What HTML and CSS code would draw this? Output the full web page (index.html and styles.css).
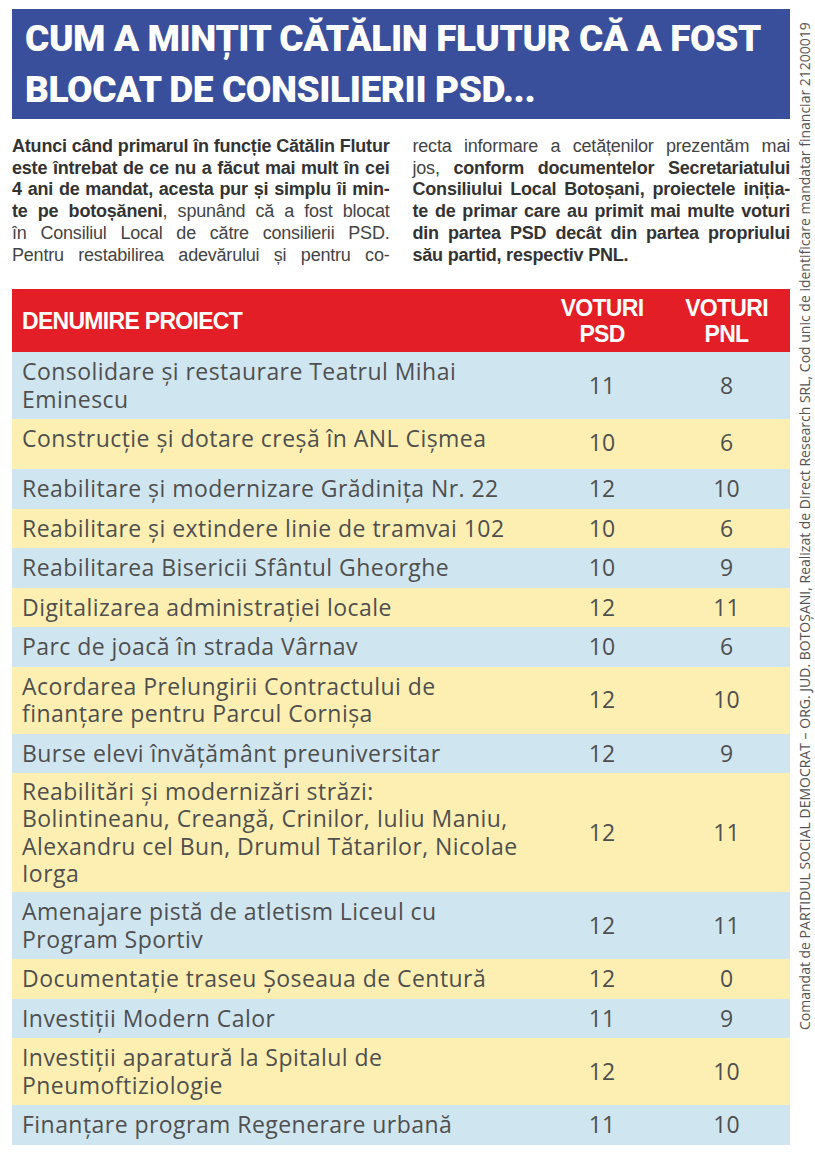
FILE: index.html
```html
<!DOCTYPE html>
<html lang="ro">
<head>
<meta charset="utf-8">
<title>Cum a mințit Cătălin Flutur</title>
<link rel="stylesheet" href="styles.css">
</head>
<body>
<div class="page">
  <main class="content">
    <header class="headline">
      <h1>CUM A MINȚIT CĂTĂLIN FLUTUR CĂ A FOST<br>BLOCAT DE CONSILIERII PSD...</h1>
    </header>
    <section class="intro">
      <div class="col">
        <span class="ln"><b>Atunci când primarul în funcție Cătălin Flutur</b></span>
        <span class="ln"><b>este întrebat de ce nu a făcut mai mult în cei</b></span>
        <span class="ln"><b>4 ani de mandat, acesta pur și simplu îi min-</b></span>
        <span class="ln"><b>te pe botoșăneni</b>, spunând că a fost blocat</span>
        <span class="ln">în Consiliul Local de către consilierii PSD.</span>
        <span class="ln">Pentru restabilirea adevărului și pentru co-</span>
      </div>
      <div class="col">
        <span class="ln">recta informare a cetățenilor prezentăm mai</span>
        <span class="ln">jos, <b>conform documentelor Secretariatului</b></span>
        <span class="ln"><b>Consiliului Local Botoșani, proiectele iniția-</b></span>
        <span class="ln"><b>te de primar care au primit mai multe voturi</b></span>
        <span class="ln"><b>din partea PSD decât din partea propriului</b></span>
        <span class="ln last"><b>său partid, respectiv PNL.</b></span>
      </div>
    </section>
    <table class="votes">
      <colgroup>
        <col class="c-name"><col class="c-psd"><col class="c-pnl">
      </colgroup>
      <thead>
        <tr>
          <th class="h-name">DENUMIRE PROIECT</th>
          <th class="h-num">VOTURI<br>PSD</th>
          <th class="h-num">VOTURI<br>PNL</th>
        </tr>
      </thead>
      <tbody>
        <tr class="blue"><td>Consolidare și restaurare Teatrul Mihai<br>Eminescu</td><td class="n">11</td><td class="n">8</td></tr>
        <tr class="yellow tall"><td>Construcție și dotare creșă în ANL Cișmea</td><td class="n">10</td><td class="n">6</td></tr>
        <tr class="blue"><td>Reabilitare și modernizare Grădinița Nr. 22</td><td class="n">12</td><td class="n">10</td></tr>
        <tr class="yellow"><td>Reabilitare și extindere linie de tramvai 102</td><td class="n">10</td><td class="n">6</td></tr>
        <tr class="blue"><td>Reabilitarea Bisericii Sfântul Gheorghe</td><td class="n">10</td><td class="n">9</td></tr>
        <tr class="yellow"><td>Digitalizarea administrației locale</td><td class="n">12</td><td class="n">11</td></tr>
        <tr class="blue"><td>Parc de joacă în strada Vârnav</td><td class="n">10</td><td class="n">6</td></tr>
        <tr class="yellow"><td>Acordarea Prelungirii Contractului de<br>finanțare pentru Parcul Cornișa</td><td class="n">12</td><td class="n">10</td></tr>
        <tr class="blue"><td>Burse elevi învățământ preuniversitar</td><td class="n">12</td><td class="n">9</td></tr>
        <tr class="yellow tight"><td>Reabilitări și modernizări străzi:<br>Bolintineanu, Creangă, Crinilor, Iuliu Maniu,<br>Alexandru cel Bun, Drumul Tătarilor, Nicolae<br>Iorga</td><td class="n">12</td><td class="n">11</td></tr>
        <tr class="blue"><td>Amenajare pistă de atletism Liceul cu<br>Program Sportiv</td><td class="n">12</td><td class="n">11</td></tr>
        <tr class="yellow"><td>Documentație traseu Șoseaua de Centură</td><td class="n">12</td><td class="n">0</td></tr>
        <tr class="blue"><td>Investiții Modern Calor</td><td class="n">11</td><td class="n">9</td></tr>
        <tr class="yellow"><td>Investiții aparatură la Spitalul de<br>Pneumoftiziologie</td><td class="n">12</td><td class="n">10</td></tr>
        <tr class="blue"><td>Finanțare program Regenerare urbană</td><td class="n">11</td><td class="n">10</td></tr>
      </tbody>
    </table>
  </main>
  <aside class="disclaimer">
    <p>Comandat de PARTIDUL SOCIAL DEMOCRAT – ORG. JUD. BOTOȘANI, Realizat de Direct Research SRL, Cod unic de identificare mandatar financiar 21200019</p>
  </aside>
</div>
</body>
</html>
```

FILE: styles.css
```css
html, body {
  margin: 0;
  padding: 0;
  background: #ffffff;
}

.page {
  display: flex;
  align-items: flex-start;
  padding-left: 12px;
}

.content {
  width: 778px;
  flex: none;
}

/* Headline */
.headline {
  margin-top: 9px;
  background: #3a4f9c;
  padding: 4px 13px 4px;
  overflow: hidden;
}

.headline h1 {
  margin: 0;
  font-family: Roboto, "Liberation Sans", sans-serif;
  font-weight: 900;
  font-size: 37px;
  letter-spacing: -0.4px;
  line-height: 51px;
  color: #ffffff;
  white-space: nowrap;
}

/* Intro text */
.intro {
  margin-top: 17px;
  display: grid;
  grid-template-columns: 1fr 1fr;
  column-gap: 23px;
  font-family: "Liberation Sans", Arial, sans-serif;
  font-size: 18px;
  letter-spacing: -0.2px;
  line-height: 21.7px;
  color: #444444;
}

.intro .col {
  display: flex;
  flex-direction: column;
}

.intro .ln {
  display: block;
  text-align: justify;
  text-align-last: justify;
  white-space: nowrap;
}

.intro .ln.last {
  text-align-last: left;
}

.intro b {
  font-weight: 700;
  color: #333333;
}

/* Table */
.votes {
  margin-top: 23px;
  width: 778px;
  border-collapse: collapse;
  border-spacing: 0;
  table-layout: fixed;
}

.c-name { width: 529px; }
.c-psd { width: 122px; }
.c-pnl { width: 127px; }

.votes th {
  background: #e31e26;
  color: #ffffff;
  font-family: "Liberation Sans", Arial, sans-serif;
  font-weight: 700;
  font-size: 23px;
  letter-spacing: -0.7px;
  line-height: 26px;
  padding: 5.5px 10px;
  vertical-align: middle;
}

.votes .h-name {
  text-align: left;
}

.votes .h-num {
  text-align: center;
}

.votes td {
  font-family: "Open Sans", "Noto Sans", sans-serif;
  font-weight: 400;
  font-size: 23px;
  letter-spacing: 0.45px;
  line-height: 27.5px;
  color: #4f4f4f;
  padding: 6px 10px;
  vertical-align: middle;
  white-space: nowrap;
}

.votes td.n {
  text-align: center;
  padding-left: 0;
  padding-right: 0;
  letter-spacing: 0;
}

.votes tr.blue td { background: #cfe6f1; }
.votes tr.yellow td { background: #fdefb2; }

.votes tr.tall td { padding-bottom: 16.5px; }
.votes tr.tall td.n { padding-top: 10px; padding-bottom: 12.5px; }
.votes tr.tight td { padding-top: 4.5px; padding-bottom: 4.5px; }

/* Vertical disclaimer */
.disclaimer {
  flex: none;
  margin-left: 6px;
  margin-top: 8px;
  width: 18px;
  height: 1022px;
  writing-mode: vertical-rl;
  transform: rotate(180deg);
}

.disclaimer p {
  margin: 0;
  font-family: "Open Sans", "Noto Sans", sans-serif;
  font-size: 14px;
  line-height: 18px;
  color: #555555;
  white-space: nowrap;
}
```
